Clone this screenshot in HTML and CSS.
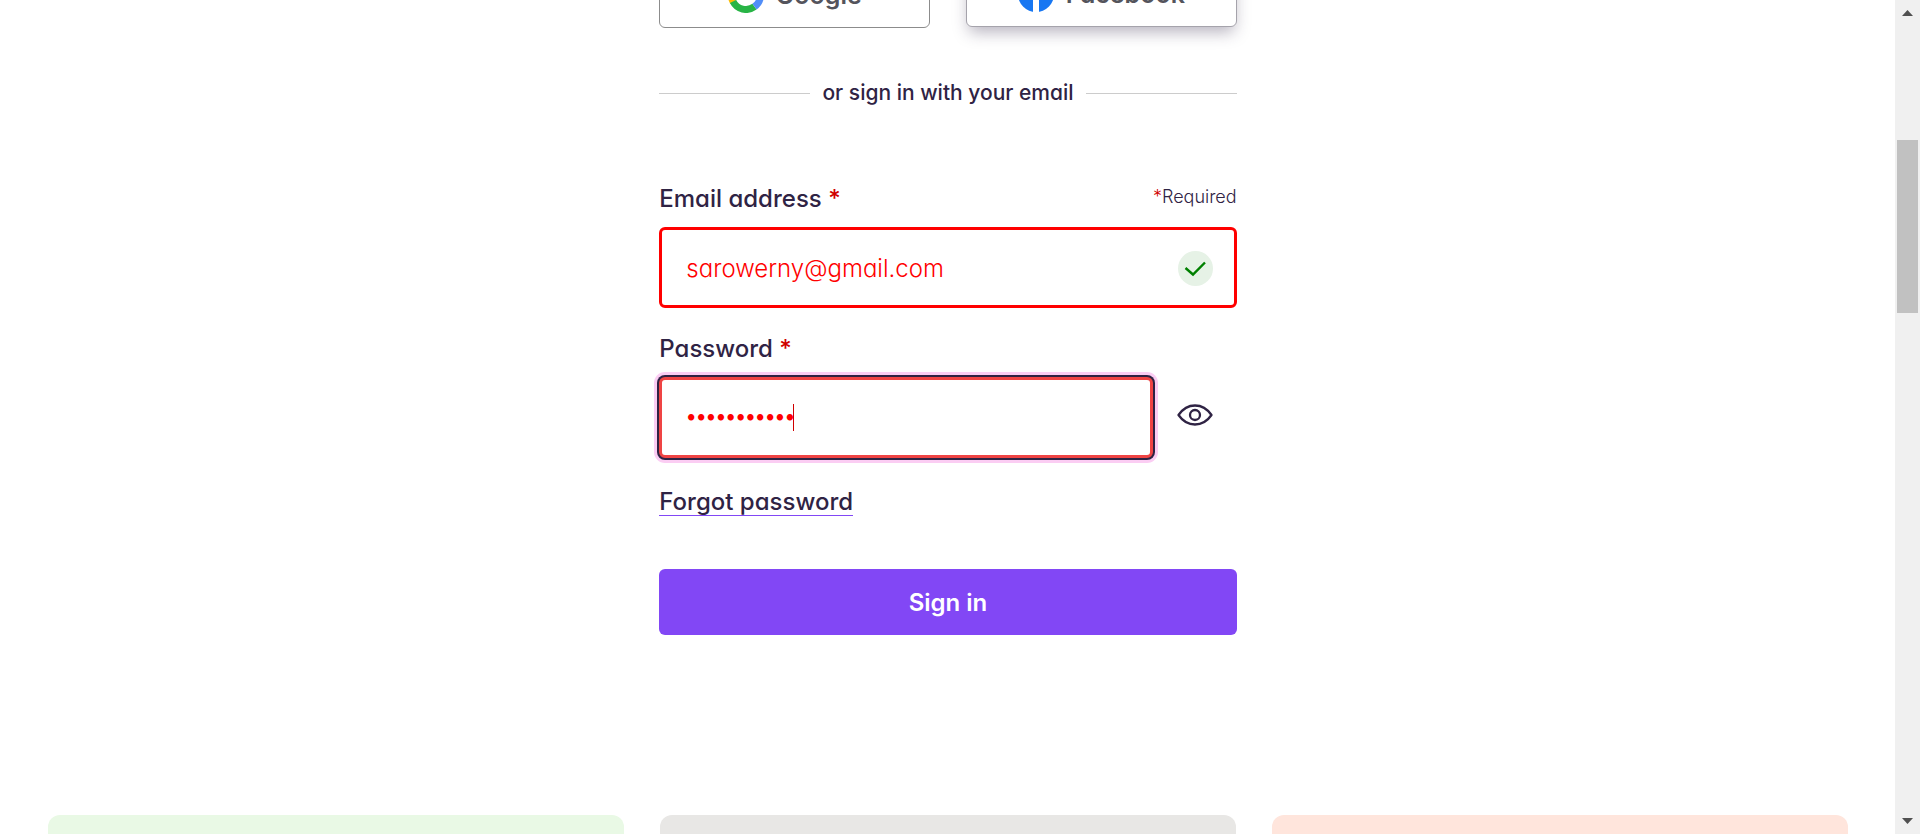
FILE: index.html
```html
<!DOCTYPE html>
<html lang="en">
<head>
<meta charset="utf-8">
<meta name="viewport" content="width=device-width, initial-scale=1">
<title>Sign in</title>
<link rel="stylesheet" href="styles.css">
</head>
<body>
<div class="window">
  <main class="page">
    <section class="signin">
      <div class="social">
        <button type="button" class="social-button">
          <svg class="brand" viewBox="0 0 36 36" fill="none" stroke-width="7" aria-hidden="true">
            <path stroke="#ea4335" d="M5 11.3A14.5 14.5 0 0 1 28 7.500"/>
            <path stroke="#fbbc05" d="M5.200 25A14.500 14.500 0 0 1 5 11.300"/>
            <path stroke="#28b446" d="M5 24.500A14.500 14.500 0 0 0 26.500 29.700"/>
            <path stroke="#518ef8" d="M26.500 29.700A14.500 14.500 0 0 0 32.500 18H19"/>
          </svg>
          <span>Google</span>
        </button>
        <button type="button" class="social-button raised">
          <svg class="brand" viewBox="0 0 36 36" aria-hidden="true">
            <circle cx="18" cy="18" r="18" fill="#1877f2"/>
            <path fill="#fff" d="M15 36V23h-5v-6h5v-4c0-5 3-8 8-8h3v5h-2c-2 0-3 1-3 3v4h5l-1 6h-4v13z"/>
          </svg>
          <span>Facebook</span>
        </button>
      </div>
      <p class="divider">or sign in with your email</p>
      <form class="form">
        <div class="label-row">
          <label class="label" for="email">Email address <span class="star">*</span></label>
          <span class="required"><span class="star">*</span>Required</span>
        </div>
        <div class="email-field">
          <input class="input" id="email" type="email" value="sarowerny@gmail.com">
          <svg class="check" viewBox="0 0 35 35" aria-hidden="true">
            <circle cx="17.500" cy="17.500" r="17.500" fill="#e6f2e6"/>
            <path d="M7.500 17l7.500 6.500 12-12" fill="none" stroke="#008000" stroke-width="2.400"/>
          </svg>
        </div>
        <div class="label-row">
          <label class="label" for="password">Password <span class="star">*</span></label>
        </div>
        <div class="password-field">
          <div class="password-box">
            <input class="input focused" id="password" type="password" value="password123">
            <span class="caret"></span>
          </div>
          <button type="button" class="reveal" aria-label="Show password">
            <svg class="eye" viewBox="0 0 36 22" fill="none" stroke="#2f2344" stroke-width="2.300" aria-hidden="true">
              <path stroke-linejoin="round" d="M1.500 11C6 4.500 11.500 1.500 18 1.500S30 4.500 34.500 11C30 17.500 24.500 20.500 18 20.500S6 17.500 1.500 11z"/>
              <circle cx="18" cy="11" r="5"/>
            </svg>
          </button>
        </div>
        <a class="forgot" href="#">Forgot password</a>
        <button type="submit" class="submit">Sign in</button>
      </form>
    </section>
    <section class="cards">
      <div class="card green"></div>
      <div class="card grey"></div>
      <div class="card peach"></div>
    </section>
  </main>
  <div class="scrollbar" aria-hidden="true">
    <svg class="arrow" viewBox="0 0 11 6"><path fill="#505050" d="M5.500 0L11 6H0z"/></svg>
    <div class="track"><div class="thumb"></div></div>
    <svg class="arrow" viewBox="0 0 11 6"><path fill="#505050" d="M5.500 6L11 0H0z"/></svg>
  </div>
</div>
</body>
</html>
```
FILE: styles.css
```css
* { box-sizing: border-box; }
body {
  margin: 0;
  background: #fff;
  color: #2f2344;
  font-family: Inter, "Liberation Sans", sans-serif;
  font-feature-settings: "cv11" 1;
  font-size: 24px;
  line-height: 32px;
}
button, input { font: inherit; font-feature-settings: inherit; }
.window { display: flex; height: 100vh; overflow: hidden; }
.page { flex: 1; min-width: 0; padding: 0 47px 0 48px; }

.signin { width: calc((100% - 68px) / 3); min-width: 320px; margin: -38px auto 0; }
.social { display: grid; grid-template-columns: 1fr 1fr; gap: 36px; }
.social-button {
  display: flex;
  align-items: center;
  justify-content: center;
  gap: 12px;
  height: 66px;
  padding: 0;
  border: 1px solid #8c8c8c;
  border-radius: 6px;
  background: #fff;
  color: #54545c;
  font-size: 25px;
  font-weight: 600;
}
.raised {
  transform: translateY(-1px);
  border-color: #a5a3ab;
  box-shadow: 0 8px 16px -3px rgba(47, 35, 68, 0.35);
}
.brand { width: 36px; height: 36px; }

.divider {
  display: flex;
  align-items: center;
  gap: 12px;
  margin: 49px 0 74px;
  font-size: 21px;
  font-weight: 500;
}
.divider::before, .divider::after { content: ""; flex: 1; height: 1px; background: #ccc; }

.form { display: flex; flex-direction: column; }
.label-row { display: flex; justify-content: space-between; margin-bottom: 12px; }
.label { font-weight: 500; }
.star { color: #d00000; }
.required { font-size: 18px; line-height: 28px; font-weight: 300; }
.input {
  display: block;
  width: 100%;
  height: 81px;
  padding: 1px 24px 0;
  border: 3px solid #f00;
  border-radius: 6px;
  background: #fff;
  color: #f00;
  font-weight: 300;
  outline: none;
}
.email-field, .password-box { position: relative; }
.email-field { margin-bottom: 25px; }
.check { position: absolute; top: 24px; right: 24px; width: 35px; height: 35px; }
.password-field { display: flex; }
.password-box { flex: 1; }
.focused {
  padding: 0 24px 2px;
  border-color: #ef4444;
  box-shadow: 0 0 0 2px #2f2344, 0 0 0 5px #fbcdf3;
  font-family: Lato, sans-serif;
  font-size: 17px;
  font-weight: 400;
}
.caret { position: absolute; top: 27px; left: 134px; width: 1px; height: 27px; background: #d00000; }
.reveal {
  display: flex;
  align-items: center;
  justify-content: center;
  width: 84px;
  height: 76px;
  padding: 0;
  border: 0;
  background: none;
}
.eye { width: 36px; height: 22px; }
.forgot {
  align-self: flex-start;
  margin: 31px 0 53px;
  line-height: 26px;
  border-bottom: 1px solid #8247f5;
  color: inherit;
  font-weight: 500;
  text-decoration: none;
}
.submit {
  height: 66px;
  padding: 2px 0 0;
  border: 0;
  border-radius: 6px;
  background: #8247f5;
  color: #fff;
  font-weight: 600;
}

.cards { display: grid; grid-template-columns: repeat(3, 1fr); gap: 36px; margin-top: 180px; }
.card { height: 240px; border-radius: 12px; }
.green { background: #e9f9e5; }
.grey { background: #e8e7e5; }
.peach { background: #ffe5dc; }

.scrollbar {
  display: flex;
  flex-direction: column;
  align-items: center;
  width: 25px;
  padding: 10px 2px;
  background: #f0f0f0;
}
.arrow { width: 11px; height: 6px; }
.track { flex: 1; width: 100%; padding-top: 124px; }
.thumb { height: 173px; background: #c1c1c1; }
```
